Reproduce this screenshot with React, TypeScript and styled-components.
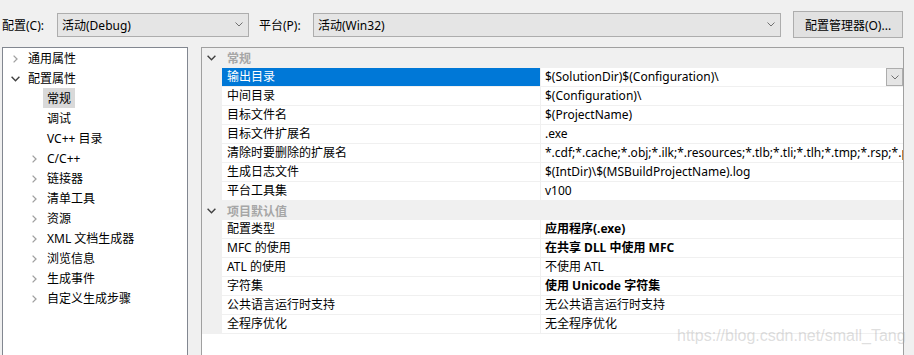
import React from "react";
import styled, { createGlobalStyle } from "styled-components";

const Global = createGlobalStyle`
  html, body { margin: 0; padding: 0; background: #f0f0f0; }
  body {
    font-family: "Noto Sans", "Noto Sans CJK SC", sans-serif;
    font-size: 12px;
    color: #000;
    overflow: hidden;
  }
`;

const Page = styled.div`
  width: 914px;
  height: 355px;
  display: flex;
  flex-direction: column;
  position: relative;
  overflow: hidden;
`;

const Toolbar = styled.div`
  height: 47px;
  display: flex;
  align-items: center;
  padding: 2px 0 0 2px;
  box-sizing: border-box;
`;

const Label = styled.span<{ $w: number; $gap?: number }>`
  width: ${(p) => p.$w}px;
  margin-left: ${(p) => p.$gap ?? 0}px;
  white-space: nowrap;
`;

const Combo = styled.div<{ $w: number }>`
  width: ${(p) => p.$w}px;
  height: 24px;
  box-sizing: border-box;
  border: 1px solid #adadad;
  background: #e5e5e5;
  display: flex;
  align-items: center;
  padding: 0 5px 0 4px;
`;

const ComboText = styled.span`
  flex: 1;
  white-space: nowrap;
`;

const Button = styled.div`
  margin-left: 12px;
  width: 110px;
  height: 27px;
  box-sizing: border-box;
  border: 1px solid #adadad;
  background: #e1e1e1;
  display: flex;
  align-items: center;
  justify-content: center;
  white-space: nowrap;
`;

const Main = styled.div`
  flex: 1;
  display: flex;
  min-height: 0;
`;

const Tree = styled.div`
  margin-left: 2px;
  width: 186px;
  box-sizing: border-box;
  border: 1px solid #828790;
  border-bottom: none;
  background: #fff;
  display: flex;
  flex-direction: column;
`;

const TreeRow = styled.div<{ $level: number }>`
  height: 20px;
  display: flex;
  align-items: center;
  padding-left: ${(p) => 4 + p.$level * 19}px;
`;

const Toggle = styled.span`
  width: 17px;
  height: 20px;
  display: flex;
  align-items: center;
  justify-content: center;
  padding-top: 1px;
  box-sizing: border-box;
`;

const TreeLabel = styled.span<{ $selected?: boolean }>`
  height: 20px;
  line-height: 22px;
  padding: 0 4px;
  white-space: nowrap;
  background: ${(p) => (p.$selected ? "#d9d9d9" : "transparent")};
`;

const Grid = styled.div`
  margin-left: 13px;
  width: 703px;
  box-sizing: border-box;
  border: 1px solid #a0a0a0;
  border-bottom: none;
  background: #fff;
  display: flex;
  flex-direction: column;
`;

const Category = styled.div<{ $h: number }>`
  height: ${(p) => p.$h}px;
  background: #f0f0f0;
  display: grid;
  grid-template-columns: 19px 1fr;
  column-gap: 1px;
  align-items: center;
`;

const CatText = styled.span`
  padding-left: 5px;
  color: #a6a6a6;
  font-weight: 700;
`;

const Row = styled.div`
  height: 19px;
  box-sizing: border-box;
  display: grid;
  grid-template-columns: 19px 318px 1fr;
  column-gap: 1px;
  padding-bottom: 1px;
  background: #f0f0f0;
`;

const Gutter = styled.div`
  background: #f0f0f0;
  display: flex;
  align-items: center;
  justify-content: center;
`;

const NameCell = styled.div<{ $selected?: boolean }>`
  background: ${(p) => (p.$selected ? "#0078d7" : "#fff")};
  color: ${(p) => (p.$selected ? "#fff" : "#000")};
  padding-left: 5px;
  line-height: 18px;
  white-space: nowrap;
  overflow: hidden;
`;

const ValueCell = styled.div<{ $bold?: boolean }>`
  background: #fff;
  display: flex;
  align-items: center;
  min-width: 0;
  font-weight: ${(p) => (p.$bold ? 700 : 400)};
`;

const ValueText = styled.span`
  flex: 1;
  min-width: 0;
  padding-left: 4px;
  line-height: 18px;
  white-space: nowrap;
  overflow: hidden;
`;

const DropBtn = styled.span`
  width: 17px;
  height: 18px;
  box-sizing: border-box;
  border: 1px solid #adadad;
  background: #e5e5e5;
  display: flex;
  align-items: center;
  justify-content: center;
`;

const Watermark = styled.div`
  position: absolute;
  left: 677px;
  top: 327px;
  font-family: "Liberation Sans", sans-serif;
  font-size: 16px;
  color: rgba(170, 170, 170, 0.4);
  white-space: nowrap;
  pointer-events: none;
`;

const ChevronRight = () => (
  <svg width="5" height="8" viewBox="0 0 5 8">
    <path d="M0.6 0.6 L4 4 L0.6 7.4" stroke="#a0a0a0" strokeWidth="1.3" fill="none" />
  </svg>
);

const ChevronDown = () => (
  <svg width="9" height="6" viewBox="0 0 9 6">
    <path d="M0.6 0.8 L4.5 4.7 L8.4 0.8" stroke="#404040" strokeWidth="1.4" fill="none" />
  </svg>
);

const ComboChevron = () => (
  <svg width="8" height="5" viewBox="0 0 8 5">
    <path d="M0.5 0.5 L4 4 L7.5 0.5" stroke="#707070" strokeWidth="1" fill="none" />
  </svg>
);

type TreeItem = { label: string; level: number; toggle: "none" | "right" | "down"; selected?: boolean };

const treeItems: TreeItem[] = [
  { label: "通用属性", level: 0, toggle: "right" },
  { label: "配置属性", level: 0, toggle: "down" },
  { label: "常规", level: 1, toggle: "none", selected: true },
  { label: "调试", level: 1, toggle: "none" },
  { label: "VC++ 目录", level: 1, toggle: "none" },
  { label: "C/C++", level: 1, toggle: "right" },
  { label: "链接器", level: 1, toggle: "right" },
  { label: "清单工具", level: 1, toggle: "right" },
  { label: "资源", level: 1, toggle: "right" },
  { label: "XML 文档生成器", level: 1, toggle: "right" },
  { label: "浏览信息", level: 1, toggle: "right" },
  { label: "生成事件", level: 1, toggle: "right" },
  { label: "自定义生成步骤", level: 1, toggle: "right" },
];

type Prop = { name: string; value: string; bold?: boolean; selected?: boolean };
type Section = { title: string; h: number; props: Prop[] };

const sections: Section[] = [
  {
    title: "常规",
    h: 20,
    props: [
      { name: "输出目录", value: "$(SolutionDir)$(Configuration)\\", selected: true },
      { name: "中间目录", value: "$(Configuration)\\" },
      { name: "目标文件名", value: "$(ProjectName)" },
      { name: "目标文件扩展名", value: ".exe" },
      {
        name: "清除时要删除的扩展名",
        value: "*.cdf;*.cache;*.obj;*.ilk;*.resources;*.tlb;*.tli;*.tlh;*.tmp;*.rsp;*.pgc;*.pgd;*.meta;$(TargetPath)",
      },
      { name: "生成日志文件", value: "$(IntDir)\\$(MSBuildProjectName).log" },
      { name: "平台工具集", value: "v100" },
    ],
  },
  {
    title: "项目默认值",
    h: 19,
    props: [
      { name: "配置类型", value: "应用程序(.exe)", bold: true },
      { name: "MFC 的使用", value: "在共享 DLL 中使用 MFC", bold: true },
      { name: "ATL 的使用", value: "不使用 ATL" },
      { name: "字符集", value: "使用 Unicode 字符集", bold: true },
      { name: "公共语言运行时支持", value: "无公共语言运行时支持" },
      { name: "全程序优化", value: "无全程序优化" },
    ],
  },
];

export default function App() {
  return (
    <Page>
      <Global />
      <Toolbar>
        <Label $w={55}>配置(C):</Label>
        <Combo $w={192}>
          <ComboText>活动(Debug)</ComboText>
          <ComboChevron />
        </Combo>
        <Label $w={54} $gap={10}>平台(P):</Label>
        <Combo $w={468}>
          <ComboText>活动(Win32)</ComboText>
          <ComboChevron />
        </Combo>
        <Button>配置管理器(O)...</Button>
      </Toolbar>
      <Main>
        <Tree>
          {treeItems.map((t) => (
            <TreeRow key={t.label} $level={t.level}>
              <Toggle>
                {t.toggle === "right" && <ChevronRight />}
                {t.toggle === "down" && <ChevronDown />}
              </Toggle>
              <TreeLabel $selected={t.selected}>{t.label}</TreeLabel>
            </TreeRow>
          ))}
        </Tree>
        <Grid>
          {sections.map((s) => (
            <React.Fragment key={s.title}>
              <Category $h={s.h}>
                <Gutter>
                  <ChevronDown />
                </Gutter>
                <CatText>{s.title}</CatText>
              </Category>
              {s.props.map((p) => (
                <Row key={p.name}>
                  <Gutter />
                  <NameCell $selected={p.selected}>{p.name}</NameCell>
                  <ValueCell $bold={p.bold}>
                    <ValueText>{p.value}</ValueText>
                    {p.selected && (
                      <DropBtn>
                        <ComboChevron />
                      </DropBtn>
                    )}
                  </ValueCell>
                </Row>
              ))}
            </React.Fragment>
          ))}
        </Grid>
      </Main>
      <Watermark>https://blog.csdn.net/small_Tang</Watermark>
    </Page>
  );
}
